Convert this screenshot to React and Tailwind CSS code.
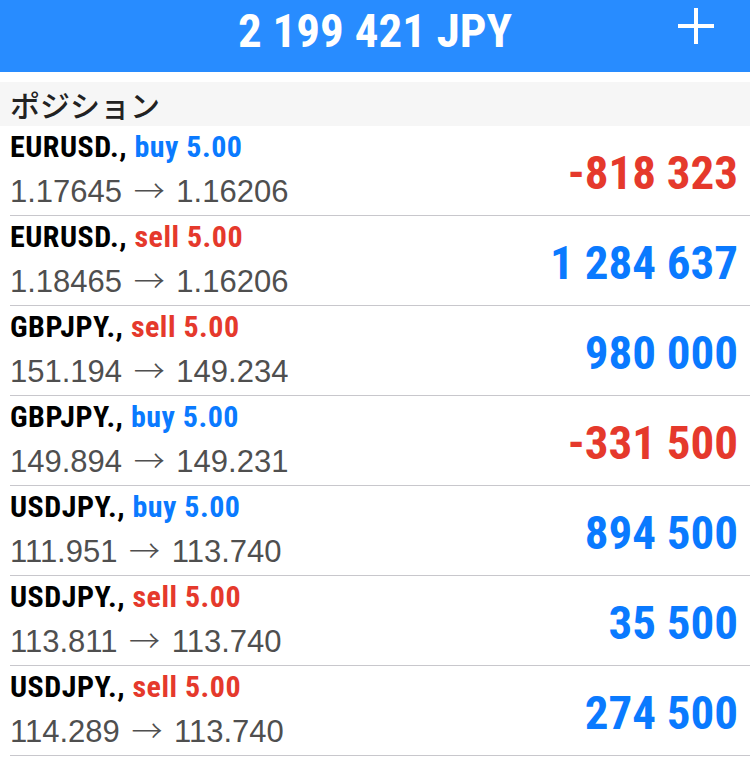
import React from "react";

const rows = [
  { sym: "EURUSD.,", side: "buy", from: "1.17645", to: "1.16206", pl: "-818 323", neg: true },
  { sym: "EURUSD.,", side: "sell", from: "1.18465", to: "1.16206", pl: "1 284 637", neg: false },
  { sym: "GBPJPY.,", side: "sell", from: "151.194", to: "149.234", pl: "980 000", neg: false },
  { sym: "GBPJPY.,", side: "buy", from: "149.894", to: "149.231", pl: "-331 500", neg: true },
  { sym: "USDJPY.,", side: "buy", from: "111.951", to: "113.740", pl: "894 500", neg: false },
  { sym: "USDJPY.,", side: "sell", from: "113.811", to: "113.740", pl: "35 500", neg: false },
  { sym: "USDJPY.,", side: "sell", from: "114.289", to: "113.740", pl: "274 500", neg: false },
];

function Row({ r }) {
  return (
    <div className="pl-[10px]">
      <div className="h-[90px] border-b border-[#c8c7cc] flex justify-between items-center pr-[12px]">
        <div className="self-start pt-[1px]">
          <div className="h-[40px] leading-[40px] text-[30px] tracking-[0.5px] font-bold font-['Roboto_Condensed',sans-serif] whitespace-nowrap">
            <span className="text-black">{r.sym}</span>{" "}
            <span className={r.side === "buy" ? "text-[#0a7aff]" : "text-[#e5392c]"}>
              {r.side} 5.00
            </span>
          </div>
          <div className="mt-[2px] h-[40px] leading-[40px] text-[31px] text-[#4f4f4f] font-['Liberation_Sans',sans-serif] whitespace-nowrap">
            {r.from}{" "}
            <span className="mx-[3px] font-['Noto_Sans_CJK_JP',sans-serif] font-light">→</span>{" "}
            {r.to}
          </div>
        </div>
        <div
          className={
            "mt-[4px] leading-none text-[47px] font-bold font-['Roboto_Condensed',sans-serif] whitespace-nowrap " +
            (r.neg ? "text-[#e5392c]" : "text-[#0a7aff]")
          }
        >
          {r.pl}
        </div>
      </div>
    </div>
  );
}

export default function App() {
  return (
    <div className="w-[750px] h-[761px] bg-white overflow-hidden">
      <div className="relative h-[72px] bg-[#288cff] flex justify-center items-start pt-[7px]">
        <div className="text-white text-[47px] leading-none font-bold font-['Roboto_Condensed',sans-serif] whitespace-nowrap">
          2 199 421 JPY
        </div>
        <svg
          className="absolute right-[36px] top-[8px]"
          width="36"
          height="36"
          viewBox="0 0 36 36"
        >
          <rect x="16" y="0" width="4" height="36" fill="#fff" />
          <rect x="0" y="16" width="36" height="4" fill="#fff" />
        </svg>
      </div>
      <div className="mt-[10px] h-[44px] bg-[#f6f6f6] flex items-center px-[10px]">
        <span className="text-[30px] leading-none text-[#222] font-medium font-['Noto_Sans_CJK_JP',sans-serif]">
          ポジション
        </span>
      </div>
      {rows.map((r, i) => (
        <Row key={i} r={r} />
      ))}
    </div>
  );
}
